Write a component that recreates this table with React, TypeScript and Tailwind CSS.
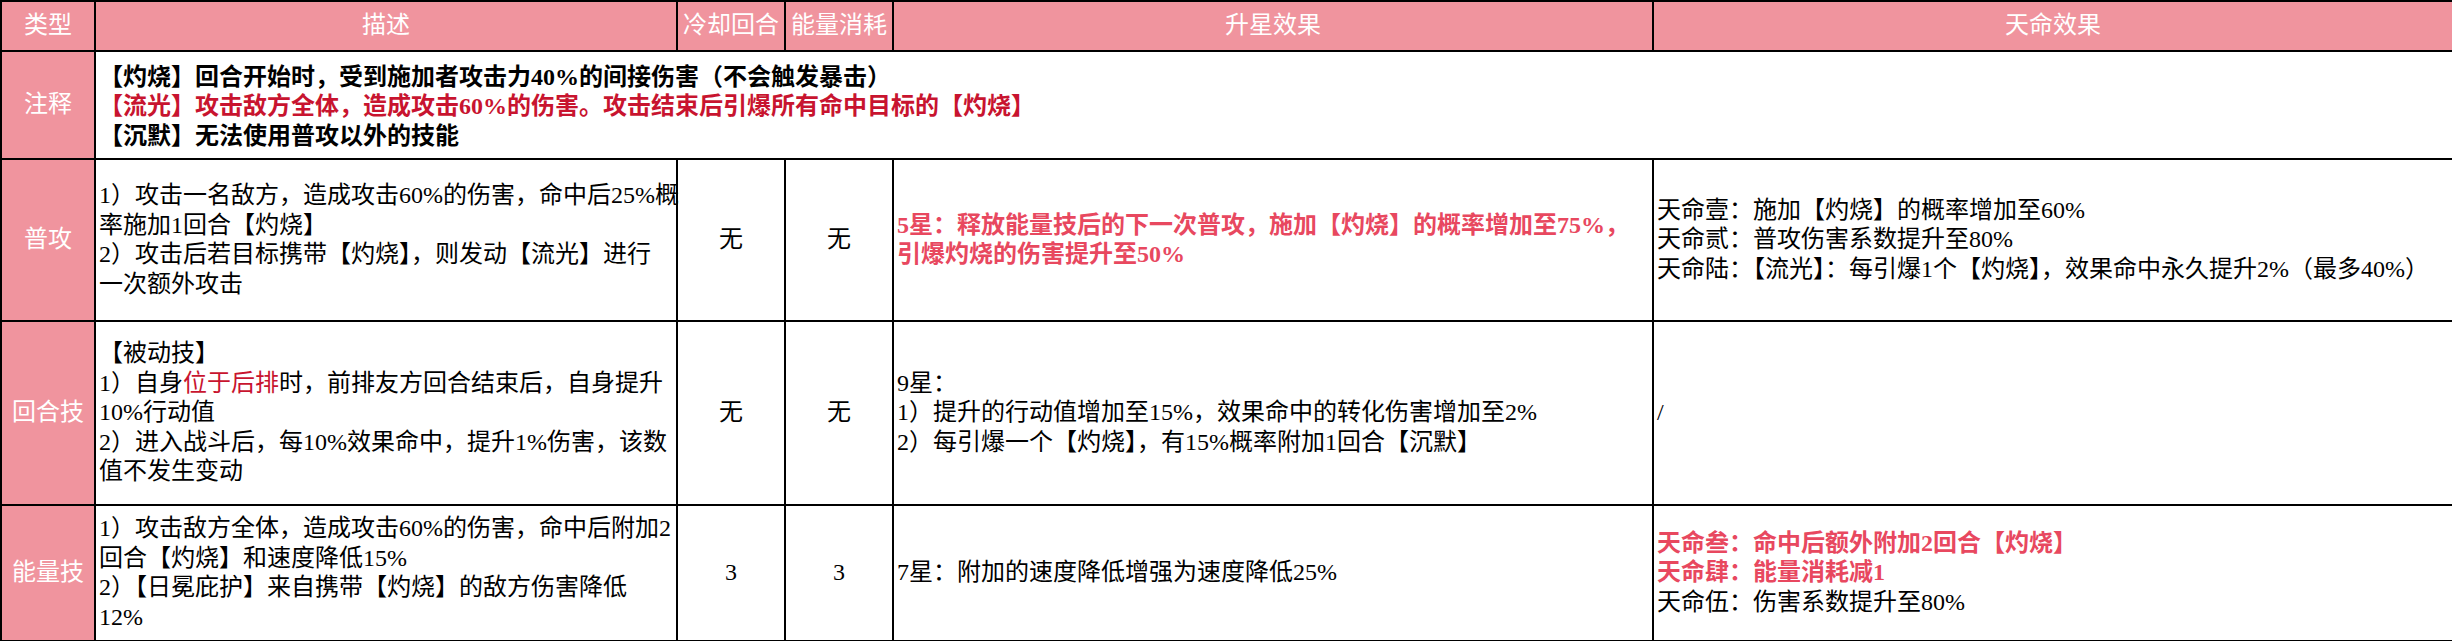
import React from "react";

const cell = "border-2 border-black align-middle px-[3px] whitespace-nowrap";
const head = "border-2 border-black align-middle text-center text-white bg-[#f0949e] whitespace-nowrap";
const side = "border-2 border-black align-middle text-center text-white bg-[#f0949e] whitespace-nowrap";
const dark = "text-[#c8142f]";
const pink = "text-[#e8485f] font-bold";

export default function App() {
  return (
    <div className="w-[2452px] h-[641px] bg-white overflow-hidden font-['Liberation_Serif','Noto_Sans_CJK_SC',serif] text-[24px] leading-[29.5px] text-black">
      <table className="table-fixed border-collapse w-[2452px]">
        <colgroup>
          <col className="w-[94px]" />
          <col className="w-[582px]" />
          <col className="w-[108px]" />
          <col className="w-[108px]" />
          <col className="w-[760px]" />
          <col className="w-[800px]" />
        </colgroup>
        <tbody>
          <tr className="h-[50px]">
            <td className={head}>类型</td>
            <td className={head}>描述</td>
            <td className={head}>冷却回合</td>
            <td className={head}>能量消耗</td>
            <td className={head}>升星效果</td>
            <td className={head}>天命效果</td>
          </tr>
          <tr className="h-[108px]">
            <td className={side}>注释</td>
            <td className={`${cell} font-bold`} colSpan={5}>
              <div className="pt-[4px]">
                【灼烧】回合开始时，受到施加者攻击力40%的间接伤害（不会触发暴击）
                <br />
                <span className={dark}>【流光】攻击敌方全体，造成攻击60%的伤害。攻击结束后引爆所有命中目标的【灼烧】</span>
                <br />
                【沉默】无法使用普攻以外的技能
              </div>
            </td>
          </tr>
          <tr className="h-[162px]">
            <td className={side}>普攻</td>
            <td className={cell}>
              1）攻击一名敌方，造成攻击60%的伤害，命中后25%概
              <br />
              率施加1回合【灼烧】
              <br />
              2）攻击后若目标携带【灼烧】，则发动【流光】进行
              <br />
              一次额外攻击
            </td>
            <td className={`${cell} text-center`}>无</td>
            <td className={`${cell} text-center`}>无</td>
            <td className={`${cell} ${pink}`}>
              5星：释放能量技后的下一次普攻，施加【灼烧】的概率增加至75%，
              <br />
              引爆灼烧的伤害提升至50%
            </td>
            <td className={cell}>
              天命壹：施加【灼烧】的概率增加至60%
              <br />
              天命贰：普攻伤害系数提升至80%
              <br />
              天命陆：【流光】：每引爆1个【灼烧】，效果命中永久提升2%（最多40%）
            </td>
          </tr>
          <tr className="h-[184px]">
            <td className={side}>回合技</td>
            <td className={cell}>
              【被动技】
              <br />
              1）自身<span className={dark}>位于后排</span>时，前排友方回合结束后，自身提升
              <br />
              10%行动值
              <br />
              2）进入战斗后，每10%效果命中，提升1%伤害，该数
              <br />
              值不发生变动
            </td>
            <td className={`${cell} text-center`}>无</td>
            <td className={`${cell} text-center`}>无</td>
            <td className={cell}>
              9星：
              <br />
              1）提升的行动值增加至15%，效果命中的转化伤害增加至2%
              <br />
              2）每引爆一个【灼烧】，有15%概率附加1回合【沉默】
            </td>
            <td className={cell}>/</td>
          </tr>
          <tr className="h-[136px]">
            <td className={side}>能量技</td>
            <td className={cell}>
              1）攻击敌方全体，造成攻击60%的伤害，命中后附加2
              <br />
              回合【灼烧】和速度降低15%
              <br />
              2）【日冕庇护】来自携带【灼烧】的敌方伤害降低
              <br />
              12%
            </td>
            <td className={`${cell} text-center`}>3</td>
            <td className={`${cell} text-center`}>3</td>
            <td className={cell}>7星：附加的速度降低增强为速度降低25%</td>
            <td className={cell}>
              <span className={pink}>天命叁：命中后额外附加2回合【灼烧】</span>
              <br />
              <span className={pink}>天命肆：能量消耗减1</span>
              <br />
              天命伍：伤害系数提升至80%
            </td>
          </tr>
        </tbody>
      </table>
    </div>
  );
}
